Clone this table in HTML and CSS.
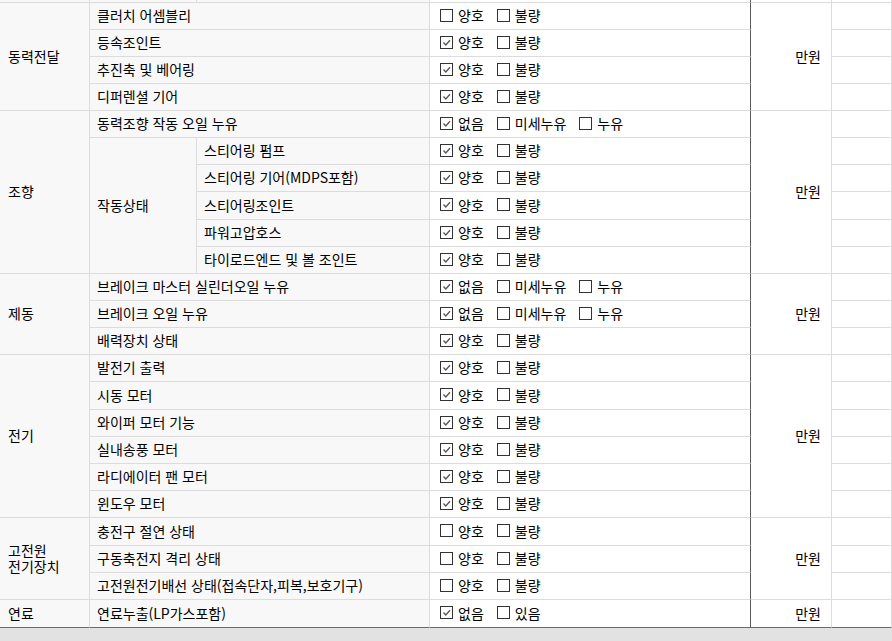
FILE: index.html
```html
<!DOCTYPE html>
<html lang="ko">
<head>
<meta charset="utf-8">
<title>점검표</title>
<link rel="stylesheet" href="styles.css">
</head>
<body>
<div class="sheet">
  <div class="c cat"></div><div class="c sub"></div><div class="c item"></div><div class="c chk"></div><div class="c won"></div><div class="c last"></div>

  <div class="c cat r4">동력전달</div>
  <div class="c item w2">클러치 어셈블리</div>
  <div class="c chk"><span class="opt"><span class="cb"></span>양호</span><span class="opt"><span class="cb"></span>불량</span></div>
  <div class="c won r4">만원</div>
  <div class="c last"></div>

  <div class="c item w2">등속조인트</div>
  <div class="c chk"><span class="opt"><span class="cb"><svg viewBox="0 0 11 11"><polyline points="2.5,5.5 4.8,8 9,3.2"/></svg></span>양호</span><span class="opt"><span class="cb"></span>불량</span></div>
  <div class="c last"></div>

  <div class="c item w2">추진축 및 베어링</div>
  <div class="c chk"><span class="opt"><span class="cb"><svg viewBox="0 0 11 11"><polyline points="2.5,5.5 4.8,8 9,3.2"/></svg></span>양호</span><span class="opt"><span class="cb"></span>불량</span></div>
  <div class="c last"></div>

  <div class="c item w2">디퍼렌셜 기어</div>
  <div class="c chk"><span class="opt"><span class="cb"><svg viewBox="0 0 11 11"><polyline points="2.5,5.5 4.8,8 9,3.2"/></svg></span>양호</span><span class="opt"><span class="cb"></span>불량</span></div>
  <div class="c last"></div>

  <div class="c cat r6">조향</div>
  <div class="c item w2">동력조향 작동 오일 누유</div>
  <div class="c chk"><span class="opt"><span class="cb"><svg viewBox="0 0 11 11"><polyline points="2.5,5.5 4.8,8 9,3.2"/></svg></span>없음</span><span class="opt"><span class="cb"></span>미세누유</span><span class="opt"><span class="cb"></span>누유</span></div>
  <div class="c won r6">만원</div>
  <div class="c last"></div>

  <div class="c sub r5">작동상태</div>
  <div class="c item">스티어링 펌프</div>
  <div class="c chk"><span class="opt"><span class="cb"><svg viewBox="0 0 11 11"><polyline points="2.5,5.5 4.8,8 9,3.2"/></svg></span>양호</span><span class="opt"><span class="cb"></span>불량</span></div>
  <div class="c last"></div>

  <div class="c item">스티어링 기어(MDPS포함)</div>
  <div class="c chk"><span class="opt"><span class="cb"><svg viewBox="0 0 11 11"><polyline points="2.5,5.5 4.8,8 9,3.2"/></svg></span>양호</span><span class="opt"><span class="cb"></span>불량</span></div>
  <div class="c last"></div>

  <div class="c item">스티어링조인트</div>
  <div class="c chk"><span class="opt"><span class="cb"><svg viewBox="0 0 11 11"><polyline points="2.5,5.5 4.8,8 9,3.2"/></svg></span>양호</span><span class="opt"><span class="cb"></span>불량</span></div>
  <div class="c last"></div>

  <div class="c item">파워고압호스</div>
  <div class="c chk"><span class="opt"><span class="cb"><svg viewBox="0 0 11 11"><polyline points="2.5,5.5 4.8,8 9,3.2"/></svg></span>양호</span><span class="opt"><span class="cb"></span>불량</span></div>
  <div class="c last"></div>

  <div class="c item">타이로드엔드 및 볼 조인트</div>
  <div class="c chk"><span class="opt"><span class="cb"><svg viewBox="0 0 11 11"><polyline points="2.5,5.5 4.8,8 9,3.2"/></svg></span>양호</span><span class="opt"><span class="cb"></span>불량</span></div>
  <div class="c last"></div>

  <div class="c cat r3">제동</div>
  <div class="c item w2">브레이크 마스터 실린더오일 누유</div>
  <div class="c chk"><span class="opt"><span class="cb"><svg viewBox="0 0 11 11"><polyline points="2.5,5.5 4.8,8 9,3.2"/></svg></span>없음</span><span class="opt"><span class="cb"></span>미세누유</span><span class="opt"><span class="cb"></span>누유</span></div>
  <div class="c won r3">만원</div>
  <div class="c last"></div>

  <div class="c item w2">브레이크 오일 누유</div>
  <div class="c chk"><span class="opt"><span class="cb"><svg viewBox="0 0 11 11"><polyline points="2.5,5.5 4.8,8 9,3.2"/></svg></span>없음</span><span class="opt"><span class="cb"></span>미세누유</span><span class="opt"><span class="cb"></span>누유</span></div>
  <div class="c last"></div>

  <div class="c item w2">배력장치 상태</div>
  <div class="c chk"><span class="opt"><span class="cb"><svg viewBox="0 0 11 11"><polyline points="2.5,5.5 4.8,8 9,3.2"/></svg></span>양호</span><span class="opt"><span class="cb"></span>불량</span></div>
  <div class="c last"></div>

  <div class="c cat r6">전기</div>
  <div class="c item w2">발전기 출력</div>
  <div class="c chk"><span class="opt"><span class="cb"><svg viewBox="0 0 11 11"><polyline points="2.5,5.5 4.8,8 9,3.2"/></svg></span>양호</span><span class="opt"><span class="cb"></span>불량</span></div>
  <div class="c won r6">만원</div>
  <div class="c last"></div>

  <div class="c item w2">시동 모터</div>
  <div class="c chk"><span class="opt"><span class="cb"><svg viewBox="0 0 11 11"><polyline points="2.5,5.5 4.8,8 9,3.2"/></svg></span>양호</span><span class="opt"><span class="cb"></span>불량</span></div>
  <div class="c last"></div>

  <div class="c item w2">와이퍼 모터 기능</div>
  <div class="c chk"><span class="opt"><span class="cb"><svg viewBox="0 0 11 11"><polyline points="2.5,5.5 4.8,8 9,3.2"/></svg></span>양호</span><span class="opt"><span class="cb"></span>불량</span></div>
  <div class="c last"></div>

  <div class="c item w2">실내송풍 모터</div>
  <div class="c chk"><span class="opt"><span class="cb"><svg viewBox="0 0 11 11"><polyline points="2.5,5.5 4.8,8 9,3.2"/></svg></span>양호</span><span class="opt"><span class="cb"></span>불량</span></div>
  <div class="c last"></div>

  <div class="c item w2">라디에이터 팬 모터</div>
  <div class="c chk"><span class="opt"><span class="cb"><svg viewBox="0 0 11 11"><polyline points="2.5,5.5 4.8,8 9,3.2"/></svg></span>양호</span><span class="opt"><span class="cb"></span>불량</span></div>
  <div class="c last"></div>

  <div class="c item w2">윈도우 모터</div>
  <div class="c chk"><span class="opt"><span class="cb"><svg viewBox="0 0 11 11"><polyline points="2.5,5.5 4.8,8 9,3.2"/></svg></span>양호</span><span class="opt"><span class="cb"></span>불량</span></div>
  <div class="c last"></div>

  <div class="c cat r3 two">고전원<br>전기장치</div>
  <div class="c item w2">충전구 절연 상태</div>
  <div class="c chk"><span class="opt"><span class="cb"></span>양호</span><span class="opt"><span class="cb"></span>불량</span></div>
  <div class="c won r3">만원</div>
  <div class="c last"></div>

  <div class="c item w2">구동축전지 격리 상태</div>
  <div class="c chk"><span class="opt"><span class="cb"></span>양호</span><span class="opt"><span class="cb"></span>불량</span></div>
  <div class="c last"></div>

  <div class="c item w2">고전원전기배선 상태(접속단자,피복,보호기구)</div>
  <div class="c chk"><span class="opt"><span class="cb"></span>양호</span><span class="opt"><span class="cb"></span>불량</span></div>
  <div class="c last"></div>

  <div class="c cat end">연료</div>
  <div class="c item w2 end">연료누출(LP가스포함)</div>
  <div class="c chk end"><span class="opt"><span class="cb"><svg viewBox="0 0 11 11"><polyline points="2.5,5.5 4.8,8 9,3.2"/></svg></span>없음</span><span class="opt"><span class="cb"></span>있음</span></div>
  <div class="c won end">만원</div>
  <div class="c last end"></div>
</div>
<div class="footer"></div>
</body>
</html>
```

FILE: styles.css
```css
html, body {
  margin: 0;
  padding: 0;
  background: #ffffff;
  overflow: hidden;
}

body {
  width: 892px;
  height: 641px;
  font-family: "Noto Sans CJK KR", "Noto Sans", sans-serif;
  font-size: 14px;
  color: #000000;
}

.sheet {
  display: grid;
  grid-template-columns: 90px 107px 233px 321px 81px 1fr;
  grid-template-rows:
    3px
    27px 27px 27px 27px 27px 27px 27px
    28px
    27px 27px 27px 27px 27px 27px
    28px
    27px 27px 27px 27px
    28px
    27px 27px
    28px;
}

.c {
  box-sizing: border-box;
  border-right: 1px solid #dcdcdc;
  border-bottom: 1px solid #dcdcdc;
  display: flex;
  align-items: center;
  white-space: nowrap;
  overflow: hidden;
  line-height: 1;
  padding-bottom: 2px;
  background: #ffffff;
}

.cat {
  background: #f8f8f8;
  padding-left: 8px;
}

.sub {
  background: #f8f8f8;
  padding-left: 7px;
}

.item {
  background: #f8f8f8;
  padding-left: 7px;
}

.w2 { grid-column: span 2; }
.r3 { grid-row: span 3; }
.r4 { grid-row: span 4; }
.r5 { grid-row: span 5; }
.r6 { grid-row: span 6; }

.two {
  line-height: 16px;
}

.chk {
  padding-left: 10px;
  border-right-color: #5a5a5a;
}

.won {
  justify-content: flex-end;
  padding-right: 10px;
}

.end {
  border-bottom-color: #6a6a6a;
}

.opt {
  display: inline-flex;
  align-items: center;
  margin-right: 13px;
}

.cb {
  box-sizing: border-box;
  width: 13px;
  height: 13px;
  border: 1px solid #333333;
  background: #ffffff;
  margin-right: 5px;
  display: inline-flex;
  align-items: center;
  justify-content: center;
}

.cb svg {
  width: 11px;
  height: 11px;
  fill: none;
  stroke: #555555;
  stroke-width: 1.3;
}

.footer {
  height: 13px;
  background: #e2e2e2;
}
```
